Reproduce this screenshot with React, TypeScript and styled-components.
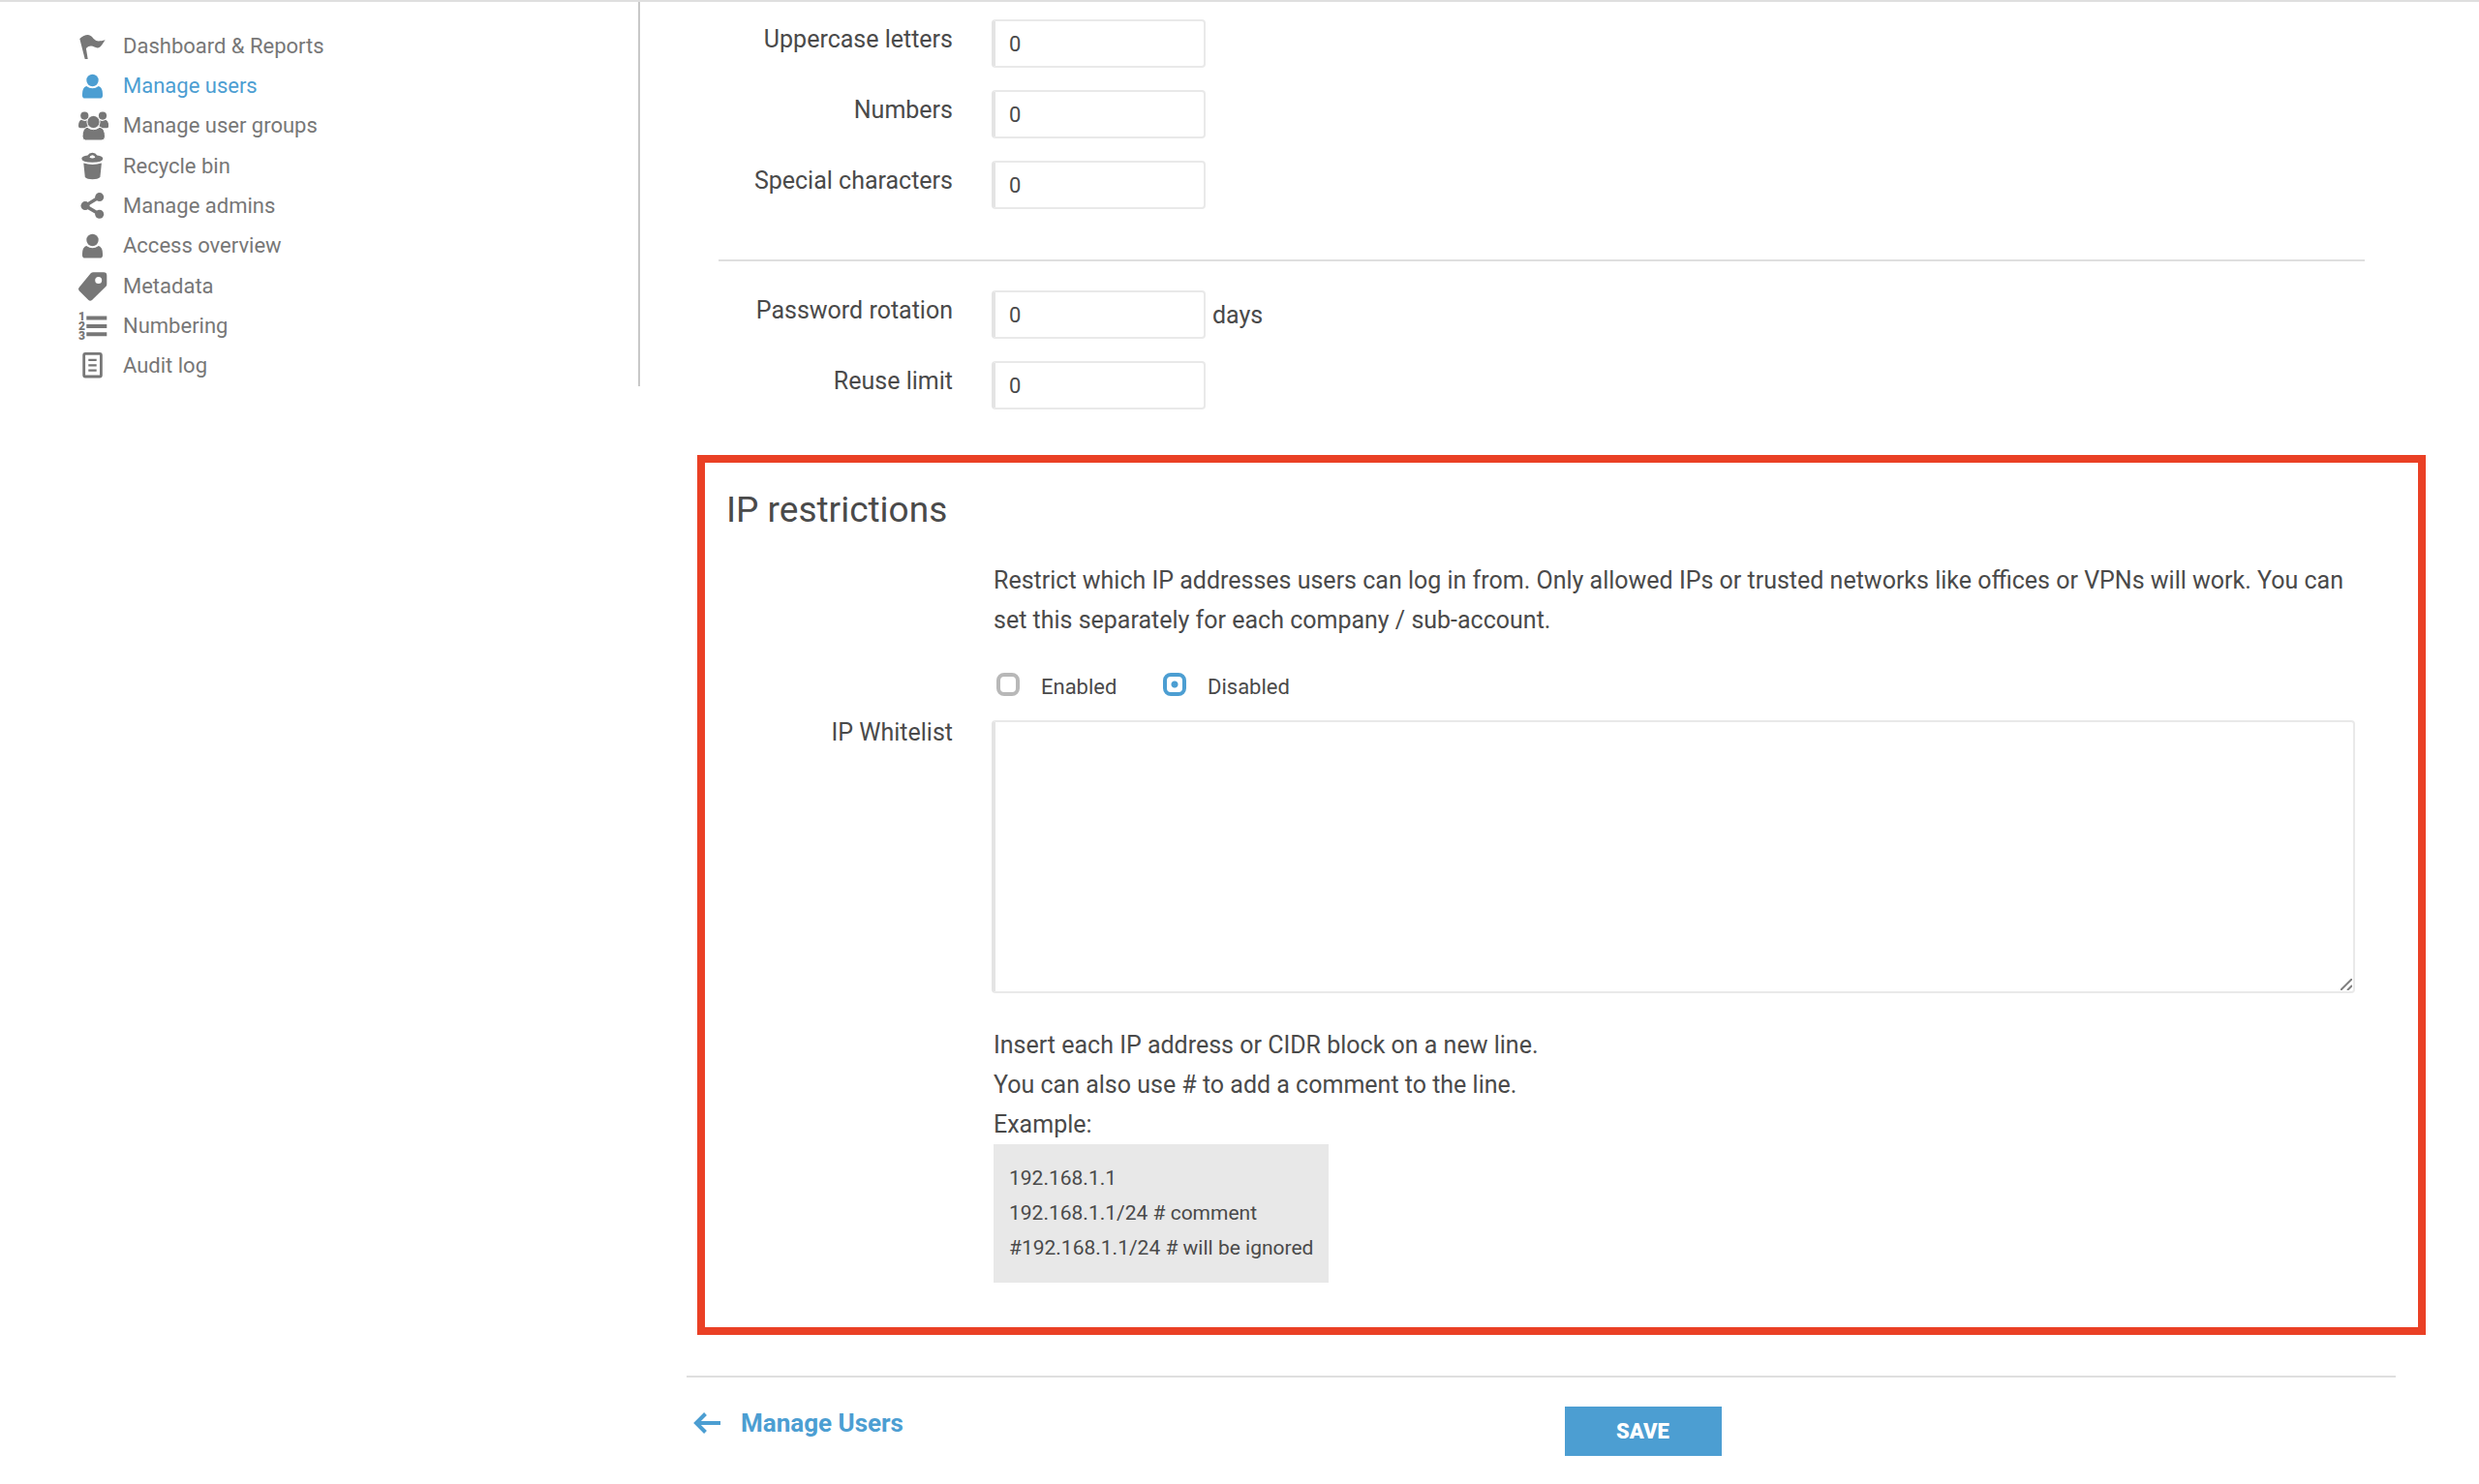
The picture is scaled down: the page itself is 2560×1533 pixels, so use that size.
import React, { useState } from 'react';
import styled, { createGlobalStyle } from 'styled-components';

const color = {
  text: '#4a4a4a',
  muted: '#777777',
  accent: '#4c9ed2',
  line: '#dfdfdf',
  field: '#e9e9e9',
  fieldEdge: '#e4e4e4',
  alert: '#ea4025',
};

const GlobalStyle = createGlobalStyle`
  *, *::before, *::after { box-sizing: border-box; }
  body {
    margin: 0;
    background: #ffffff;
    color: ${color.text};
    font-family: Roboto, 'Liberation Sans', sans-serif;
    font-size: 25px;
    line-height: 41px;
  }
`;

const Page = styled.div`
  display: grid;
  grid-template-columns: 661px minmax(0, 1fr);
  align-items: start;
  border-top: 2px solid ${color.line};
`;

const Sidebar = styled.nav`
  padding-top: 25px;
  border-right: 2px solid #c8c8c8;
`;

const Menu = styled.ul`
  display: grid;
  grid-auto-rows: 1fr;
  min-height: 372px;
  margin: 0;
  padding: 0 0 0 80px;
  list-style: none;
`;

const MenuItem = styled.li`
  display: flex;
  align-items: center;
`;

const MenuLink = styled.a<{ $active?: boolean }>`
  display: flex;
  align-items: center;
  gap: 15px;
  color: ${(p) => (p.$active ? color.accent : color.muted)};
  font-size: 22px;
  line-height: 32px;
  text-decoration: none;
`;

const MenuIcon = styled.svg`
  flex: none;
  width: 32px;
  height: 32px;
  fill: currentColor;
`;

const Digit = styled.text`
  font-size: 12px;
  font-weight: 900;
`;

const Main = styled.main`
  padding-top: 18px;
`;

const Policy = styled.section`
  margin: 0 118px 0 81px;
`;

const Rows = styled.div`
  display: grid;
  gap: 23px;
`;

const FormRow = styled.div<{ $label: number }>`
  display: grid;
  grid-template-columns: ${(p) => p.$label}px minmax(0, 1fr);
  column-gap: 40px;
  align-items: start;
`;

const RowLabel = styled.label`
  text-align: right;
`;

const Control = styled.div`
  display: flex;
  align-items: center;
  gap: 7px;
`;

const NumberBox = styled.input`
  width: 221px;
  height: 50px;
  padding: 0 14px;
  border: 2px solid ${color.field};
  border-left: 4px solid ${color.fieldEdge};
  border-radius: 4px;
  background: #ffffff;
  color: ${color.text};
  font: inherit;
  font-size: 22px;
`;

const Divider = styled.hr`
  height: 2px;
  margin: 52px 0 30px;
  border: 0;
  background: ${color.line};
`;

const Restrictions = styled.section`
  margin: 47px 55px 0 59px;
  padding: 27px 56px 46px 22px;
  border: 8px solid ${color.alert};
`;

const Heading = styled.h2`
  margin: 0 0 30px;
  font-size: 37px;
  font-weight: 400;
  line-height: 44px;
`;

const Indented = styled.div`
  margin-left: 276px;
`;

const Paragraph = styled.p`
  margin: 0;
`;

const Options = styled.div`
  display: flex;
  margin: 34px 0 12px;
  padding-left: 3px;
`;

const Option = styled.label`
  display: flex;
  align-items: flex-start;
  gap: 22px;
  width: 172px;
  font-size: 22px;
  line-height: 29px;
`;

const Radio = styled.input`
  appearance: none;
  width: 24px;
  height: 24px;
  margin: 0;
  border: 4px solid #b8b8b8;
  border-radius: 8px;
  background: #ffffff;

  &:checked {
    border-color: ${color.accent};
    background: radial-gradient(circle, ${color.accent} 3px, #ffffff 4px);
  }
`;

const WhitelistField = styled.div`
  position: relative;
  margin: 8px 9px 33px 0;
`;

const Whitelist = styled.textarea`
  display: block;
  width: 100%;
  height: 282px;
  padding: 10px 14px;
  border: 2px solid ${color.field};
  border-left: 4px solid ${color.fieldEdge};
  border-radius: 4px;
  color: ${color.text};
  font: inherit;
  font-size: 22px;
  resize: vertical;

  &::-webkit-resizer {
    background: transparent;
  }
`;

const Grip = styled.svg`
  position: absolute;
  right: 3px;
  bottom: 3px;
  width: 12px;
  height: 12px;
  stroke: #808080;
  stroke-width: 2;
  pointer-events: none;
`;

const Example = styled.pre`
  width: fit-content;
  margin: 0;
  padding: 17px 16px 18px;
  background: #e8e8e8;
  font-family: inherit;
  font-size: 21px;
  line-height: 36px;
`;

const Footer = styled.footer`
  display: grid;
  grid-template-columns: 1fr 1fr;
  align-items: start;
  margin: 42px 86px 0 48px;
  padding-top: 30px;
  border-top: 2px solid ${color.line};
`;

const BackLink = styled.a`
  display: flex;
  align-items: center;
  gap: 21px;
  padding-left: 7px;
  color: ${color.accent};
  font-size: 26px;
  font-weight: 700;
  line-height: 34px;
  text-decoration: none;
`;

const Arrow = styled.svg`
  width: 28px;
  height: 24px;
  fill: none;
  stroke: currentColor;
  stroke-width: 4;
`;

const SaveButton = styled.button`
  width: 162px;
  height: 51px;
  margin-left: 24px;
  border: 0;
  background: ${color.accent};
  color: #ffffff;
  font: inherit;
  font-size: 22px;
  font-weight: 900;
`;

const person = (
  <>
    <circle cx="15.5" cy="10" r="6.2" />
    <path d="M9.2 15.9q6.3 4.6 12.6 0q4.2 1.6 4.2 8.1v1.8q0 2.8-2.8 2.8H7.8Q5 28.6 5 25.8V24q0-6.5 4.2-8.1z" />
  </>
);

const icons: Record<string, React.ReactNode> = {
  flag: (
    <path d="M2.3 7.9Q6.5 3.9 10.7 3.9C14.5 4.3 15.5 6.8 17.3 8.6C19.5 11 22.5 11 28.7 9.3C26.5 12 25.5 15 23.3 16.6C19.5 19 17.5 15.6 14 15.6Q11 15.6 8.9 17.9L10.7 28.9H7.7Z" />
  ),
  user: person,
  group: (
    <>
      <circle cx="7.3" cy="5.6" r="4.1" />
      <circle cx="26" cy="5.6" r="4.1" />
      <path d="M4 9.8q3.3 2.2 6.5 0.2v8.2H3Q1 18.2 1 16.2q0-5.2 3-6.4zM29.2 9.8q-3.3 2.2-6.5 0.2v8.2h7.5q2 0 2-2q0-5.2-3-6.4z" />
      <circle cx="16.5" cy="12" r="6.6" stroke="#ffffff" strokeWidth="1" />
      <path stroke="#ffffff" strokeWidth="1" d="M10 17.2q6.5 5 13 0q5.5 1.5 5.5 9.8q0 4-3.5 4H8.5Q5 31 5 27q0-8.3 5-9.8z" />
    </>
  ),
  bin: (
    <>
      <path fillRule="evenodd" d="M10.5 4.4q1.5-2.7 4.9-2.7t4.9 2.7q6 1 6 3.4q0 3.9-11 3.9t-11-3.9q0-2.4 6.2-3.4zM12.5 6.8q2.9 1.6 5.8 0q-.4-2.6-2.9-2.6t-2.9 2.6z" />
      <path d="M6.3 12.6q9.2 2.7 18.6 0L23.4 27q-2.4 2.2-7.9 2.2T7.8 27z" />
    </>
  ),
  share: (
    <>
      <path d="M22.7 6.6L8 15.6l14.7 8.7" fill="none" stroke="currentColor" strokeWidth="3.5" />
      <circle cx="22.7" cy="6.6" r="4.5" />
      <circle cx="8" cy="15.6" r="4.5" />
      <circle cx="22.7" cy="24.3" r="4.5" />
    </>
  ),
  tag: (
    <path
      fillRule="evenodd"
      d="M16.5 1.3H27q3.3 0 3.3 3.3v8.9q0 1.5-1 2.5L15 30q-2 1.3-3.6 0L1.6 20.2q-1.2-1.6 0-3.2L13.5 2.6q1.3-1.3 3-1.3zM21.7 6.1a3.5 3.5 0 1 0 0 7a3.5 3.5 0 1 0 0-7z"
    />
  ),
  numbers: (
    <>
      <path d="M9.3 5.5h21v4h-21zM9.3 13.9h21v4h-21zM9.3 22.3h21v4h-21z" />
      <Digit x="1" y="10">1</Digit>
      <Digit x="1" y="20">2</Digit>
      <Digit x="1" y="30">3</Digit>
    </>
  ),
  log: (
    <g fill="none" stroke="currentColor">
      <rect x="6.7" y="3.4" width="17.7" height="23.6" rx="1.5" strokeWidth="2.8" />
      <path strokeWidth="2.2" d="M11.3 9.9h8.4M11.3 15.3h8.4M11.3 20.7h8.4" />
    </g>
  ),
};

const menu = [
  { icon: 'flag', label: 'Dashboard & Reports' },
  { icon: 'user', label: 'Manage users', active: true },
  { icon: 'group', label: 'Manage user groups' },
  { icon: 'bin', label: 'Recycle bin' },
  { icon: 'share', label: 'Manage admins' },
  { icon: 'user', label: 'Access overview' },
  { icon: 'tag', label: 'Metadata' },
  { icon: 'numbers', label: 'Numbering' },
  { icon: 'log', label: 'Audit log' },
];

const characterRules = [
  { id: 'uppercase', label: 'Uppercase letters' },
  { id: 'numbers', label: 'Numbers' },
  { id: 'special', label: 'Special characters' },
];

const rotationRules = [
  { id: 'rotation', label: 'Password rotation', unit: 'days' },
  { id: 'reuse', label: 'Reuse limit' },
];

function RuleRow({ id, label, unit }: { id: string; label: string; unit?: string }) {
  return (
    <FormRow $label={242}>
      <RowLabel htmlFor={id}>{label}</RowLabel>
      <Control>
        <NumberBox id={id} type="text" inputMode="numeric" defaultValue="0" />
        {unit && <span>{unit}</span>}
      </Control>
    </FormRow>
  );
}

export default function App() {
  const [mode, setMode] = useState('Disabled');

  return (
    <>
      <GlobalStyle />
      <Page>
        <Sidebar>
          <Menu>
            {menu.map((item) => (
              <MenuItem key={item.label}>
                <MenuLink href="#" $active={item.active}>
                  <MenuIcon viewBox="0 0 32 32" aria-hidden="true">
                    {icons[item.icon]}
                  </MenuIcon>
                  {item.label}
                </MenuLink>
              </MenuItem>
            ))}
          </Menu>
        </Sidebar>

        <Main>
          <Policy>
            <Rows>
              {characterRules.map((rule) => (
                <RuleRow key={rule.id} {...rule} />
              ))}
            </Rows>
            <Divider />
            <Rows>
              {rotationRules.map((rule) => (
                <RuleRow key={rule.id} {...rule} />
              ))}
            </Rows>
          </Policy>

          <Restrictions>
            <Heading>IP restrictions</Heading>
            <Indented>
              <Paragraph>
                Restrict which IP addresses users can log in from. Only allowed IPs or trusted
                networks like offices or VPNs will work. You can set this separately for each
                company / sub-account.
              </Paragraph>
              <Options role="radiogroup" aria-label="IP restrictions">
                {['Enabled', 'Disabled'].map((option) => (
                  <Option key={option}>
                    <Radio
                      type="radio"
                      name="ip-restrictions"
                      value={option}
                      checked={mode === option}
                      onChange={() => setMode(option)}
                    />
                    {option}
                  </Option>
                ))}
              </Options>
            </Indented>
            <FormRow $label={234}>
              <RowLabel htmlFor="whitelist">IP Whitelist</RowLabel>
              <WhitelistField>
                <Whitelist id="whitelist" />
                <Grip viewBox="0 0 12 12" aria-hidden="true">
                  <path d="M0 12L12 0M7 12L12 7" />
                </Grip>
              </WhitelistField>
            </FormRow>
            <Indented>
              <Paragraph>
                Insert each IP address or CIDR block on a new line.
                <br />
                You can also use # to add a comment to the line.
                <br />
                Example:
              </Paragraph>
              <Example>{'192.168.1.1\n192.168.1.1/24 # comment\n#192.168.1.1/24 # will be ignored'}</Example>
            </Indented>
          </Restrictions>

          <Footer>
            <BackLink href="#">
              <Arrow viewBox="0 0 28 24" aria-hidden="true">
                <path d="M28 12H3M12.5 2.5L3 12l9.5 9.5" />
              </Arrow>
              Manage Users
            </BackLink>
            <SaveButton type="button">SAVE</SaveButton>
          </Footer>
        </Main>
      </Page>
    </>
  );
}
